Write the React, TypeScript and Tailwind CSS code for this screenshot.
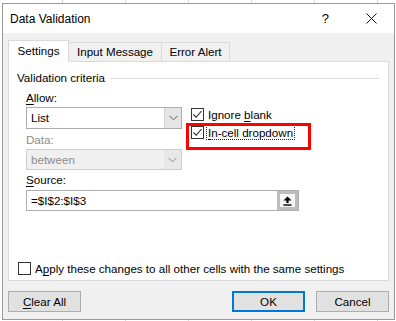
import React from "react";

const F = "font-['Liberation_Sans',Arial,sans-serif]";

function Check({ checked }: { checked: boolean }) {
  return (
    <span className="w-[13px] h-[13px] border border-[#333333] bg-white flex items-center justify-center shrink-0">
      {checked && (
        <svg width="11" height="11" viewBox="0 0 11 11">
          <path d="M1.5 5.5 L4.2 8.3 L9.5 2" fill="none" stroke="#222" strokeWidth="1.1" />
        </svg>
      )}
    </span>
  );
}

function Chevron({ color }: { color: string }) {
  return (
    <svg width="9" height="6" viewBox="0 0 9 6">
      <path d="M0.5 0.8 L4.5 4.8 L8.5 0.8" fill="none" stroke={color} strokeWidth="1" />
    </svg>
  );
}

export default function App() {
  return (
    <div
      className={`${F} w-[396px] h-[321px] bg-white bg-[repeating-linear-gradient(90deg,transparent_0,transparent_62px,#d6d6d6_62px,#d6d6d6_63px)] pt-[3px] pl-[2px] text-[11.6px] text-black overflow-hidden`}
    >
      <div className="relative w-[393px] h-[317px] border border-[#9a9a9a] bg-[#f0f0f0] flex flex-col">
        {/* title bar */}
        <div className="h-[29px] bg-white flex items-center pl-[7px] shrink-0">
          <span className="text-[12px] leading-none">Data Validation</span>
          <span className="ml-auto text-[13px] leading-none mr-[37px]">?</span>
          <svg width="11" height="11" viewBox="0 0 11 11" className="mr-[17px]">
            <path d="M0.5 0.5 L10.5 10.5 M10.5 0.5 L0.5 10.5" stroke="#111" strokeWidth="1" />
          </svg>
        </div>
        {/* body */}
        <div className="flex-1 flex flex-col px-[5px]">
          {/* tabs */}
          <div className="flex items-end pt-[6px] h-[28px] shrink-0">
            <div className="w-[61px] h-[22px] bg-white border border-b-0 border-[#d9d9d9] flex items-center justify-center pb-[1px] relative z-10 mb-[-1px]">
              Settings
            </div>
            <div className="w-[93px] h-[19px] border border-l-0 border-b-0 border-[#d9d9d9] flex items-center justify-center">
              Input Message
            </div>
            <div className="w-[68px] h-[19px] border border-l-0 border-b-0 border-[#d9d9d9] flex items-center justify-center">
              Error Alert
            </div>
          </div>
          {/* panel */}
          <div className="relative h-[220px] bg-white border border-[#d9d9d9] flex flex-col pl-[8px] pr-[9px] pt-[8px]">
            <div className="flex items-center h-[16px]">
              <span>Validation criteria</span>
              <div className="flex-1 ml-[5px] h-[1px] bg-[#dcdcdc]" />
            </div>
            <div className="flex pl-[9px] mt-[4px]">
              <div className="flex flex-col w-[156px]">
                <div className="h-[16px] leading-[16px]">
                  <span className="underline underline-offset-2">A</span>llow:
                </div>
                <div className="mt-[1px] h-[22px] border border-[#acacac] bg-white flex items-stretch">
                  <div className="flex-1 pl-[4px] flex items-center">List</div>
                  <div className="w-[17px] bg-[#e5e5e5] border-l border-[#d0d0d0] flex items-center justify-center">
                    <Chevron color="#606060" />
                  </div>
                </div>
                <div className="h-[16px] leading-[16px] mt-[3px] text-[#8d8d8d]">Data:</div>
                <div className="mt-[1px] h-[21px] border border-[#cccccc] bg-[#f0f0f0] flex items-stretch text-[#8d8d8d]">
                  <div className="flex-1 pl-[4px] flex items-center">between</div>
                  <div className="w-[17px] bg-[#e8e8e8] flex items-center justify-center">
                    <Chevron color="#8a8a8a" />
                  </div>
                </div>
              </div>
              <div className="flex flex-col ml-[9px] pt-[18px] gap-[5px]">
                <div className="flex items-center gap-[4px] h-[13px]">
                  <Check checked />
                  <span>
                    Ignore <span className="underline underline-offset-2">b</span>lank
                  </span>
                </div>
                <div className="flex items-center gap-[2px] h-[13px]">
                  <Check checked />
                  <span className="border border-dotted border-[#222] px-[1px] leading-[13px]">
                    <span className="underline underline-offset-2">I</span>n-cell dropdown
                  </span>
                </div>
              </div>
            </div>
            <div className="pl-[9px] mt-[2px] h-[16px] leading-[16px]">
              <span className="underline underline-offset-2">S</span>ource:
            </div>
            <div className="ml-[9px] mt-[2px] w-[273px] h-[21px] border border-[#acacac] bg-white flex items-stretch">
              <div className="flex-1 pl-[4px] flex items-center">=$I$2:$I$3</div>
              <div className="w-[21px] border-[3px] border-[#bdbdbd] bg-[#f4f4f4] flex items-center justify-center">
                <svg width="9" height="10" viewBox="0 0 9 10">
                  <path d="M4.5 0.5 L8.5 4.5 L5.6 4.5 L5.6 7 L3.4 7 L3.4 4.5 L0.5 4.5 Z" fill="#000" />
                  <rect x="0.5" y="8.3" width="8" height="1.4" fill="#000" />
                </svg>
              </div>
            </div>
            <div className="flex items-center gap-[4px] mt-[49px] pl-[1px]">
              <Check checked={false} />
              <span>
                A<span className="underline underline-offset-2">p</span>ply these changes to all other cells with the same settings
              </span>
            </div>
            {/* annotation highlight */}
            <div className="absolute left-[177px] top-[61px] w-[125px] h-[27px] border-[3px] border-[#ff0000]" />
          </div>
          {/* buttons */}
          <div className="flex mt-[10px]">
            <button className="w-[73px] h-[21px] bg-[#e1e1e1] border border-[#adadad] flex items-center justify-center">
              <span>
                <span className="underline underline-offset-2">C</span>lear All
              </span>
            </button>
            <button className="ml-auto w-[73px] h-[21px] bg-[#e1e1e1] border-2 border-[#0078d7] flex items-center justify-center">
              OK
            </button>
            <button className="ml-[11px] w-[73px] h-[21px] bg-[#e1e1e1] border border-[#adadad] flex items-center justify-center">
              Cancel
            </button>
          </div>
        </div>
      </div>
    </div>
  );
}
